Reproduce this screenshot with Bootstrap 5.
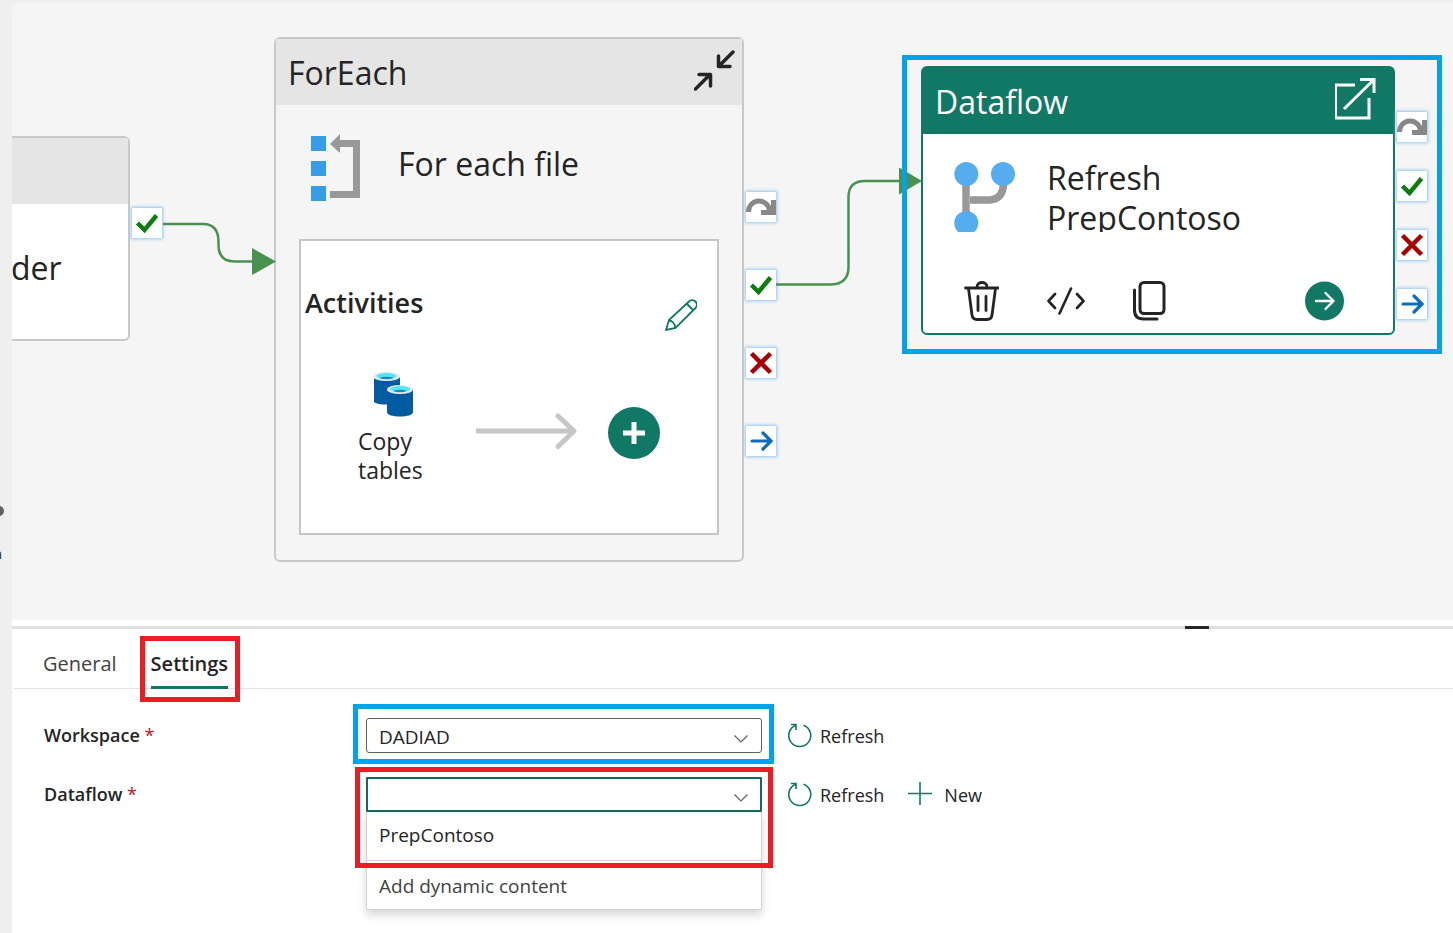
<!DOCTYPE html>
<html lang="en">
<head>
<meta charset="utf-8">
<meta name="viewport" content="width=device-width, initial-scale=1">
<title>Pipeline editor</title>
<link href="https://cdn.jsdelivr.net/npm/bootstrap@5.3.0/dist/css/bootstrap.min.css" rel="stylesheet">
<style>
  :root { --brand: #117865; --ink: #242424; --callout-blue: #00a2e8; --callout-red: #ed1c24; }
  body { font-family: "Open Sans", "Noto Sans", sans-serif; font-size: 18px; line-height: 24px; color: var(--ink); background: #efefef; }
  svg { display: block; flex: none; }
  .plain-btn { border: 0; background: none; padding: 0; color: inherit; }

  /* Left rail, scrolled almost out of view */
  .rail { width: 12px; }
  .rail-item { right: 10px; top: 506px; font-size: 14px; }
  .rail-dot { width: 10px; height: 10px; background: #616161; margin-right: -2px; margin-bottom: 26px; }

  /* Pipeline canvas: nodes are placed freely */
  .canvas { margin-top: 2px; min-height: 580px; background: #f5f5f5; border-top-left-radius: 10px; }
  .node { border: 2px solid #c8c8c8; border-radius: 6px; }
  .node-head { height: 66px; background: #e5e5e5; padding: 2px 12px 0; font-size: 32px; line-height: 40px; }
  .node-head .plain-btn { margin-bottom: 6px; }
  .node-loop .node-head { padding-right: 6px; }
  .node-name { font-size: 32px; line-height: 40px; }
  .node-source { left: 0; top: 134px; width: 118px; height: 205px; border-left: 0; border-radius: 0 6px 6px 0; }
  .node-source .node-name { padding-top: 44px; margin-left: -1px; }
  .node-loop { left: 262px; top: 35px; width: 470px; height: 525px; }
  .node-flow { left: 909px; top: 64px; width: 474px; height: 269px; border-color: var(--brand); }
  .node-flow .node-head { background: var(--brand); }
  .name-clip { height: 74px; }
  .node-actions { padding: 0 24px 12px; }
  .inner-box { margin: 0 23px 25px; border: 2px solid #c8c6c4; }
  .inner-head { padding: 44px 16px 0 4px; }
  .inner-head .plain-btn { padding-top: 14px; }
  .inner-title { font-size: 27px; line-height: 36px; }
  .inner-flow { padding: 40px 0 42px 57px; }
  .inner-step { font-size: 23px; line-height: 29px; width: 72px; padding-bottom: 6px; }
  .ports { display: flex; flex-direction: column; }
  .port { width: 30px; height: 30px; background: #fff; box-shadow: 0 0 3px 1px #8ec5f3; }
  .ports-source { left: 120px; top: 206px; }
  .ports-loop { left: 734px; top: 190px; gap: 48px; }
  .ports-flow { left: 1385px; top: 110px; gap: 29px; }
  .add-btn { width: 52px; height: 52px; background: var(--brand); margin: 4px 0 0 28px; }

  /* Callout frames drawn over the interface */
  .callout { position: absolute; pointer-events: none; border: 5px solid var(--callout-blue); }
  .callout-red { border-color: var(--callout-red); }
  .callout-node { left: 890px; top: 53px; width: 540px; height: 299px; }
  .callout-tab { inset: -9px -12px -16px -11px; }
  .callout-field { inset: -14px -12px -11px -13px; }
  .callout-menu { inset: -10px -11px 42px -11px; }

  /* Properties panel */
  .splitter { border-top: 6px solid #fff; background: #e0e0e0; }
  .splitter-grip { width: 24px; height: 3px; margin-right: 244px; background: #242424; }
  .tab-strip { margin-left: 2px; padding: 16px 29px 0; gap: 34px; border-bottom: 1px solid #e0e0e0; }
  .tab-link { color: #424242; text-decoration: none; font-size: 20px; padding: 7px 0 10px; line-height: 24px; border-bottom: 3px solid transparent; margin-bottom: -1px; }
  .tab-link.current { color: var(--ink); font-weight: 600; border-color: var(--brand); }
  .form-area { padding: 29px 32px 23px; gap: 24px; }
  .field-label { width: 322px; height: 35px; font-weight: 600; line-height: 34px; flex: none; }
  .field-label span { color: #c50f1f; font-weight: 400; }
  .field-box { width: 396px; flex: none; font-size: 19px; }
  .field-box .form-select { height: 35px; font-size: 19px; line-height: 24px; padding: 5px 40px 3px 12px; border: 1px solid #616161; border-radius: 3px; color: var(--ink);
    background-image: url("data:image/svg+xml,%3Csvg xmlns='http://www.w3.org/2000/svg' viewBox='0 0 16 16'%3E%3Cpath d='M1.500 6.500l6.500 6.500L14.500 6.500' fill='none' stroke='%23616161' stroke-width='1.200'/%3E%3C/svg%3E"); background-size: 16px 16px; background-position: right 12px bottom 7px; }
  .field-box .form-select.open { border: 2px solid #0f6b5c; border-radius: 1px; padding-left: 11px; background-position: right 11px bottom 6px; }
  .option-list { border: 1px solid #d1d1d1; border-top: 0; box-shadow: 0 5px 9px rgba(0,0,0,.16); background: #fff; }
  .option-list button { display: block; width: 100%; text-align: left; padding: 11px 12px 13px; height: 48px; }
  .option-list button + button { border-top: 1px solid #d1d1d1; height: 49px; padding: 13px 12px 11px; color: #424242; }
  .tool-btn { height: 35px; margin-left: 26px; }
  .tool-btn + .tool-btn { margin-left: 24px; }
</style>
</head>
<body>
<div class="d-flex min-vh-100">
  <aside class="rail position-relative overflow-hidden flex-shrink-0">
    <div class="rail-item position-absolute d-flex flex-column align-items-end">
      <span class="rail-dot rounded-circle"></span>
      <span>n</span>
    </div>
  </aside>

  <div class="flex-grow-1 d-flex flex-column overflow-hidden">
    <main class="canvas position-relative flex-grow-1 overflow-hidden">

      <section class="node node-source position-absolute bg-white">
        <div class="node-head"></div>
        <div class="node-name">der</div>
      </section>
      <div class="ports ports-source position-absolute">
        <span class="port"><svg width="30" height="30"><path d="M5.500 15l7 7L24.500 7.500" fill="none" stroke="#107c10" stroke-width="4.500"/></svg></span>
      </div>

      <section class="node node-loop position-absolute d-flex flex-column">
        <header class="node-head d-flex align-items-center justify-content-between">
          <span>ForEach</span>
          <button class="plain-btn" aria-label="Collapse">
            <svg width="42" height="42" fill="none" stroke="#242424" stroke-width="3.500" stroke-linecap="round" stroke-linejoin="round"><path d="M39 3L25 17M24.500 7v10.500H36M1.500 40L16 25.500M5 25.500h11.500V37"/></svg>
          </button>
        </header>
        <div class="d-flex align-items-center flex-grow-1 ps-4 pb-2">
          <svg width="62" height="68" class="ms-2"><g fill="#379be6"><path d="M3 2h15v15H3zM3 27h15v15H3zM3 52h15v15H3z"/></g><path fill="#999" d="M22 10L32 0v6h20v58H22v-7h23V13H32v6z"/></svg>
          <span class="node-name ms-4 ps-1 pb-2">For each file</span>
        </div>
        <div class="inner-box bg-white d-flex flex-column">
          <div class="inner-head d-flex justify-content-between">
            <strong class="inner-title fw-semibold">Activities</strong>
            <button class="plain-btn me-1" aria-label="Edit activities">
              <svg width="32" height="32" fill="none" stroke="#117865" stroke-width="1.800"><path d="M1 31l3-10L24 2.500a4.500 4.500 0 0 1 6.500 6.500L10.500 29zM22 5l6 6M4 21.500c3 0 6 3 6 7"/></svg>
            </button>
          </div>
          <div class="inner-flow d-flex align-items-center">
            <div class="inner-step">
              <svg width="42" height="48" class="ms-3"><g transform="translate(-1 0)"><path fill="#005ba1" d="M0 6v23c0 3 6 4.500 13.500 4.500S27 32 27 29V6z"/><ellipse cx="13.500" cy="5.500" rx="13.500" ry="4.500" fill="#e8e8e8"/><ellipse cx="13.500" cy="5" rx="10" ry="3" fill="#50e6ff"/><path fill="#198ab3" d="M6 7q7.500-2.500 15 0-7.500 2.500-15 0z"/><path fill="#005ba1" d="M14 19v22c0 3 6 4.500 13 4.500s13-1.500 13-4.500V19z"/><ellipse cx="27" cy="18.500" rx="13" ry="4.500" fill="#e8e8e8"/><ellipse cx="27" cy="18" rx="10" ry="3" fill="#50e6ff"/><path fill="#198ab3" d="M20 20q7-2.500 14 0-7 2.500-14 0z"/></g></svg>
              <div class="pt-2">Copy tables</div>
            </div>
            <svg width="102" height="38" class="ms-5 overflow-visible" fill="none" stroke="#c8c6c4" stroke-width="5"><path d="M-2 19h98"/><path d="M80 4l16 15-16 15.500" stroke-linecap="round" stroke-linejoin="round"/></svg>
            <button class="plain-btn add-btn rounded-circle d-flex align-items-center justify-content-center" aria-label="Add activity">
              <svg width="22" height="22"><path d="M11 0v22M0 11h22" stroke="#fff" stroke-width="5"/></svg>
            </button>
          </div>
        </div>
      </section>
      <div class="ports ports-loop position-absolute">
        <span class="port"><svg width="30" height="30"><path d="M2.500 20a10.500 10.500 0 0 1 21-1" fill="none" stroke="#8a8886" stroke-width="5"/><path fill="#8a8886" d="M30 8v15H15v-5h6l4-2V8z"/></svg></span>
        <span class="port"><svg width="30" height="30"><path d="M5.500 15l7 7L24.500 7.500" fill="none" stroke="#107c10" stroke-width="4.500"/></svg></span>
        <span class="port"><svg width="30" height="30"><path d="M5.500 5.500l19 19M24.500 5.500l-19 19" stroke="#a80000" stroke-width="4.500"/></svg></span>
        <span class="port"><svg width="30" height="30" fill="none" stroke="#0f6cbd" stroke-width="3.200" stroke-linecap="round"><path d="M6 15h18M17 7l8 8-8 8"/></svg></span>
      </div>

      <section class="node node-flow position-absolute bg-white d-flex flex-column">
        <header class="node-head text-white d-flex align-items-center justify-content-between">
          <span>Dataflow</span>
          <button class="plain-btn me-1" aria-label="Open dataflow">
            <svg width="42" height="42" fill="none" stroke="#fff" stroke-width="3"><path d="M20 7H.5v33H34V20M9 31L38.500 2M25 1.500h14V15"/></svg>
          </button>
        </header>
        <div class="name-clip d-flex overflow-hidden ms-4 mt-4">
          <svg width="68" height="70" class="mt-1 ps-2 overflow-visible"><path d="M11 20v30M15 38h20q13-1 13.500-16" fill="none" stroke="#999" stroke-width="7.500"/><g fill="#55adf0"><circle cx="11.300" cy="12" r="12"/><circle cx="48" cy="12" r="12"/><circle cx="11.300" cy="61" r="12"/></g></svg>
          <div class="node-name ms-4 ps-2">Refresh<br>PrepContoso</div>
        </div>
        <div class="node-actions d-flex align-items-center mt-auto">
          <button class="plain-btn ms-3" aria-label="Delete"><svg width="36" height="40" fill="none" stroke="#242424" stroke-width="2.800" stroke-linecap="round" stroke-linejoin="round"><path d="M2.500 7h33M14 6c0-6 10-6 10 0M5.500 7.500L9 34q.6 4.500 5 4.500h10q4.400 0 5-4.500l3.500-26.500M15 15.500v14M23 15.500v14"/></svg></button>
          <button class="plain-btn ms-5" aria-label="View code"><svg width="38" height="28" fill="none" stroke="#242424" stroke-width="2.600" stroke-linecap="round" stroke-linejoin="round"><path d="M8 7L1.500 14 8 21M30 7l6.500 7-6.500 7M24 1.500L12.500 26.500"/></svg></button>
          <button class="plain-btn ms-5" aria-label="Clone"><svg width="34" height="40" fill="none" stroke="#242424" stroke-width="3" stroke-linecap="round"><rect x="7" y="1.500" width="24" height="31" rx="4"/><path d="M1.500 9v20q0 9 9 9H24"/></svg></button>
          <button class="plain-btn ms-auto me-4" aria-label="Run"><svg width="40" height="40"><circle cx="19.500" cy="20" r="19.500" fill="#117865"/><path d="M11 20h17M20.500 12l8 8-8 8" fill="none" stroke="#fff" stroke-width="2.400" stroke-linecap="round" stroke-linejoin="round"/></svg></button>
        </div>
      </section>
      <div class="ports ports-flow position-absolute">
        <span class="port"><svg width="30" height="30"><path d="M2.500 20a10.500 10.500 0 0 1 21-1" fill="none" stroke="#8a8886" stroke-width="5"/><path fill="#8a8886" d="M30 8v15H15v-5h6l4-2V8z"/></svg></span>
        <span class="port"><svg width="30" height="30"><path d="M5.500 15l7 7L24.500 7.500" fill="none" stroke="#107c10" stroke-width="4.500"/></svg></span>
        <span class="port"><svg width="30" height="30"><path d="M5.500 5.500l19 19M24.500 5.500l-19 19" stroke="#a80000" stroke-width="4.500"/></svg></span>
        <span class="port"><svg width="30" height="30" fill="none" stroke="#0f6cbd" stroke-width="3.200" stroke-linecap="round"><path d="M6 15h18M17 7l8 8-8 8"/></svg></span>
      </div>

      <!-- Success connectors between the nodes -->
      <svg class="position-absolute top-0 start-0 w-100 h-100 pe-none" fill="none" stroke="#4a9150" stroke-width="2.500">
        <path d="M151 222H191Q206.500 222 206.500 240V243Q206.500 259.500 223 259.500H241"/>
        <path d="M764 282.500H818Q836.500 282.500 836.500 265V195Q836.500 179 853 179H888"/>
        <path d="M240 246l24 13.500-24 13.500zM887 165.500l23 13.500-23 13.500z" fill="#4a9150" stroke="none"/>
      </svg>
      <div class="callout callout-node"></div>
    </main>

    <section class="bg-white">
      <div class="splitter d-flex justify-content-end"><div class="splitter-grip"></div></div>
      <nav class="tab-strip d-flex">
        <a href="#" class="tab-link">General</a>
        <a href="#" class="tab-link current position-relative">Settings<span class="callout callout-red callout-tab"></span></a>
      </nav>
      <form class="form-area d-flex flex-column">
        <div class="d-flex align-items-start">
          <label class="field-label" for="workspace">Workspace <span>*</span></label>
          <div class="field-box position-relative">
            <select id="workspace" class="form-select"><option>DADIAD</option></select>
            <div class="callout callout-field"></div>
          </div>
          <button type="button" class="plain-btn tool-btn d-flex align-items-center">
            <svg width="24" height="25" class="me-2" fill="none" stroke="#117865" stroke-width="1.600"><path d="M15.500 2.200A11 11 0 1 1 8 2.200M3 1.500H8V7"/></svg>Refresh
          </button>
        </div>
        <div class="d-flex align-items-start">
          <label class="field-label" for="dataflow">Dataflow <span>*</span></label>
          <div class="field-box position-relative">
            <select id="dataflow" class="form-select open"><option></option></select>
            <div class="option-list">
              <button type="button" class="plain-btn">PrepContoso</button>
              <button type="button" class="plain-btn">Add dynamic content</button>
            </div>
            <div class="callout callout-red callout-menu"></div>
          </div>
          <button type="button" class="plain-btn tool-btn d-flex align-items-center">
            <svg width="24" height="25" class="me-2" fill="none" stroke="#117865" stroke-width="1.600"><path d="M15.500 2.200A11 11 0 1 1 8 2.200M3 1.500H8V7"/></svg>Refresh
          </button>
          <button type="button" class="plain-btn tool-btn d-flex align-items-center">
            <svg width="24" height="28" class="me-2" stroke="#117865" stroke-width="1.600"><path d="M12 1v23M0 12.500h24"/></svg><span class="ps-1">New</span>
          </button>
        </div>
      </form>
    </section>
  </div>
</div>
<script src="https://cdn.jsdelivr.net/npm/bootstrap@5.3.0/dist/js/bootstrap.bundle.min.js"></script>
</body>
</html>
